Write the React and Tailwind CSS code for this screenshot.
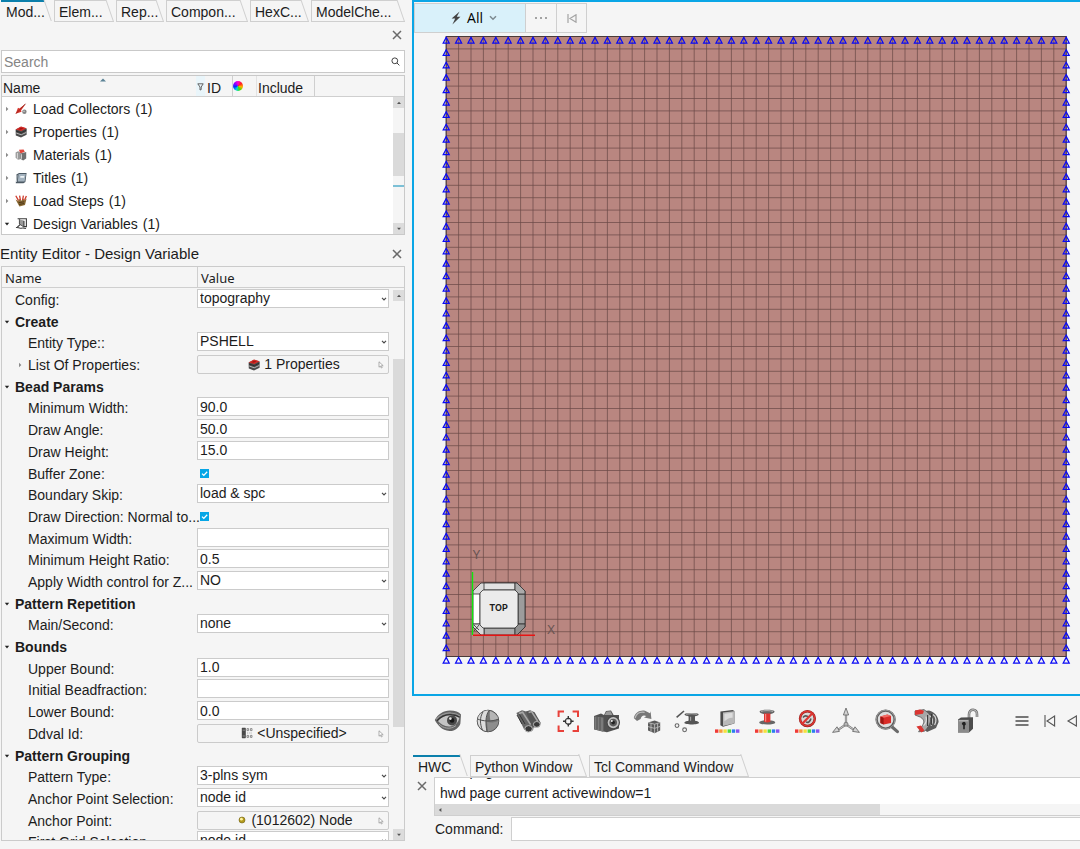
import React, { useState } from "react";

const sideTabs = [
  { label: "Mod...", width: "w-[51px]" },
  { label: "Elem...", width: "w-[60px]" },
  { label: "Rep...", width: "w-[48px]" },
  { label: "Compon...", width: "w-[82px]" },
  { label: "HexC...", width: "w-[59px]" },
  { label: "ModelChe...", width: "w-[94px]" },
];

const consoleTabs = [
  { label: "HWC", width: "w-[55px]" },
  { label: "Python Window", width: "w-[117px]" },
  { label: "Tcl Command Window", width: "w-[160px]" },
];

const treeItems = [
  { label: "Load Collectors", icon: "collector" },
  { label: "Properties", icon: "property" },
  { label: "Materials", icon: "material" },
  { label: "Titles", icon: "title" },
  { label: "Load Steps", icon: "step" },
  { label: "Design Variables", icon: "design", open: true },
];

const rows = [
  { label: "Config:", type: "select", value: "topography", top: true },
  { label: "Create", type: "group" },
  { label: "Entity Type::", type: "select", value: "PSHELL" },
  { label: "List Of Properties:", type: "button", value: "1 Properties", icon: "property", arrow: true },
  { label: "Bead Params", type: "group" },
  { label: "Minimum Width:", type: "text", value: "90.0" },
  { label: "Draw Angle:", type: "text", value: "50.0" },
  { label: "Draw Height:", type: "text", value: "15.0" },
  { label: "Buffer Zone:", type: "check" },
  { label: "Boundary Skip:", type: "select", value: "load & spc" },
  { label: "Draw Direction: Normal to...", type: "check" },
  { label: "Maximum Width:", type: "text", value: "" },
  { label: "Minimum Height Ratio:", type: "text", value: "0.5" },
  { label: "Apply Width control for Z...", type: "select", value: "NO" },
  { label: "Pattern Repetition", type: "group" },
  { label: "Main/Second:", type: "select", value: "none" },
  { label: "Bounds", type: "group" },
  { label: "Upper Bound:", type: "text", value: "1.0" },
  { label: "Initial Beadfraction:", type: "text", value: "" },
  { label: "Lower Bound:", type: "text", value: "0.0" },
  { label: "Ddval Id:", type: "button", value: "<Unspecified>", icon: "ddval" },
  { label: "Pattern Grouping", type: "group" },
  { label: "Pattern Type:", type: "select", value: "3-plns sym" },
  { label: "Anchor Point Selection:", type: "select", value: "node id" },
  { label: "Anchor Point:", type: "button", value: "(1012602) Node", icon: "node" },
  { label: "First Grid Selection", type: "select", value: "node id" },
];

function CloseIcon() {
  return (
    <svg viewBox="0 0 10 10" className="size-[10px]" stroke="#6a6a6a" strokeWidth="1.5">
      <path d="M1 1l8 8M9 1l-8 8" />
    </svg>
  );
}

function Chevron({ className }) {
  return (
    <svg viewBox="0 0 6 4" className={className} fill="none" stroke="#4a4a4a" strokeWidth="1.2">
      <path d="M1 .8l2 2 2-2" />
    </svg>
  );
}

function TreeArrow({ open }) {
  return (
    <svg viewBox="0 0 6 6" className="size-[6px] shrink-0">
      {open ? <path d="M.8 1.8h4.4L3 4.4z" fill="#222" /> : <path d="M2 .8v4.4L4.4 3z" fill="#8a8a8a" />}
    </svg>
  );
}

function SmallIcon({ name }) {
  return (
    <svg viewBox="0 0 12 12" className="size-[12px] shrink-0">
      {name === "collector" && (
        <>
          <path d="M11 .4L4.4 5.4 3 4.8.6 10.8l6-2-.6-1.4z" fill="#d8352c" />
          <path d="M10.4.8L1 10.6" stroke="#7d1f19" strokeWidth=".7" />
          <circle cx="9.4" cy="8.8" r="2.2" fill="#858585" />
          <circle cx="9" cy="8.3" r=".7" fill="#ddd" />
        </>
      )}
      {name === "property" && (
        <>
          <path d="M.6 3.4L6 .8l5.600 1.600v6.400L6 11.600.8 9.600z" fill="#4b4b4b" />
          <path d="M.6 3.400L6 .6l5.600 1.600L6.400 5z" fill="#d92d28" />
          <path d="M1 5l5.400 1.800L11.400 4" stroke="#2e2e2e" strokeWidth="1" fill="none" />
          <path d="M1.200 7l5 1.800 5.200-2.400" stroke="#b5b5b5" strokeWidth="1" fill="none" />
          <path d="M3 3.200l3-1.400 2.600.8-2.800 1.200z" fill="#a31713" />
        </>
      )}
      {name === "material" && (
        <>
          <path d="M.6 3.600L3 2.200l2.400.8v7.200l-2.400.6-2.400-2z" fill="#9a9a9a" />
          <path d="M4 .8l4.600-.4 1.200 2.400-4.400 1.600z" fill="#e2473c" />
          <path d="M5.200 4.400L11.200 3v6.400l-3 2-3-1.600z" fill="#707070" />
          <path d="M6.400 5.200v4.600M2.400 4v5.600" stroke="#e2e2e2" strokeWidth=".9" />
        </>
      )}
      {name === "title" && (
        <>
          <path d="M1.400 2.600L4 1h7.600L10.400 10l-2 1.200H.8z" fill="#4d5a64" />
          <path d="M3.600 2h7.200l-1.200 7.400H2.800z" fill="#a3b2be" />
          <path d="M5.400 4h4L9 5.800H5.200z" fill="#eef3f6" />
          <path d="M2 3.200L1.400 10" stroke="#dfe5e9" strokeWidth=".8" />
        </>
      )}
      {name === "step" && (
        <>
          <path d="M.6 4.400l2.400 1.400L4.400 4l2 1.800L8 3.600l1.400 1.600 2.200-1.600-1.600 6.400-5.600 1.400z" fill="#8a6a34" />
          <path d="M.8.8l2.600 4.600M4.600.6l.8 4.400M8.400.6L7.600 5M11.400 1L9.600 5" stroke="#cf3a2c" strokeWidth="1.300" />
          <path d="M3.600 7.600l5.600-.8M4 9.400l5.200-.8" stroke="#3d2b12" strokeWidth=".8" />
        </>
      )}
      {name === "design" && (
        <>
          <path d="M2.600.8h8.800v7.800H8.800V3.400H5v3.400L2.400 9" fill="none" stroke="#3c3c3c" strokeWidth="1.100" />
          <path d="M4.400 1v5l4.400 3V3" fill="#9a9a9a" stroke="#3c3c3c" strokeWidth=".8" />
          <path d="M1 9.600c2-.8 3 1.200 5 .6s3-.4 5 .4" fill="none" stroke="#3c3c3c" strokeWidth="1.100" />
        </>
      )}
      {name === "ddval" && (
        <>
          <rect x=".8" y=".8" width="4" height="10.400" rx=".6" fill="#4a4a4a" />
          <path d="M1.600 3.200h2.400M1.600 9h2.400" stroke="#999" strokeWidth=".8" />
          <path d="M6 1.600h1.600v2H6zM9.400 1.600H11v2H9.400zM6 8.400h1.600v2H6zM9.400 8.400H11v2H9.400z" fill="none" stroke="#777" strokeWidth=".8" />
          <path d="M6 6h5.400" stroke="#999" strokeWidth=".8" strokeDasharray="1 .8" />
        </>
      )}
      {name === "node" && (
        <>
          <circle cx="7" cy="6" r="3" fill="#b39a1c" stroke="#6f5f12" strokeWidth=".6" />
          <circle cx="6.400" cy="5.200" r="1.400" fill="#fff3a0" />
        </>
      )}
    </svg>
  );
}

function PickIcon() {
  return (
    <svg viewBox="0 0 6 8" className="absolute right-[4px] top-[5px] h-[8px] w-[6px]" fill="#fff" stroke="#9a9a9a" strokeWidth=".8">
      <path d="M1 .8v5.400l1.400-1.200.9 2 .9-.4-.8-1.900h1.800z" />
    </svg>
  );
}

function SlantTabs({ tabs, active, onSelect, label }) {
  return (
    <div role="tablist" aria-label={label} className="flex h-[22px] gap-[2px]">
      {tabs.map((tab, i) => (
        <button
          key={tab.label}
          type="button"
          role="tab"
          aria-selected={i === active}
          onClick={() => onSelect(i)}
          className={`relative shrink-0 text-left whitespace-nowrap pt-[2px] leading-[20px] after:absolute after:right-[4px] after:-top-px after:h-[22px] after:w-[6px] after:skew-x-[19deg] after:border-r after:border-[#cfcfcf] after:content-[''] ${tab.width} ${
            i === active ? "pl-[5px]" : "border-b border-l border-[#cfcfcf] pl-[4px]"
          }`}
        >
          <span
            className={`absolute left-0 top-0 right-[8px] ${
              i === active ? "h-[2px] bg-[#0b7fab]" : "h-px bg-[#cfcfcf]"
            }`}
          />
          {tab.label}
        </button>
      ))}
    </div>
  );
}

function ScrollButton({ down }) {
  return (
    <button type="button" aria-label={down ? "Scroll down" : "Scroll up"} className="flex h-[11px] w-full shrink-0 items-center justify-center bg-[#dcdcdc]">
      <svg viewBox="0 0 6 4" className="h-[4px] w-[6px]" fill="#555">
        {down ? <path d="M1 .8h4L3 3z" /> : <path d="M1 3h4L3 .8z" />}
      </svg>
    </button>
  );
}

function ModelBrowser() {
  return (
    <>
      <div className="flex h-[28px] items-center justify-end pb-[2px] pr-[3px]">
        <button type="button" aria-label="Close browser">
          <CloseIcon />
        </button>
      </div>
      <div className="ml-px flex h-[23px] items-center border border-[#c9c9c9] bg-white pr-[4px]">
        <input type="search" aria-label="Search" placeholder="Search" className="min-w-0 flex-1 px-[2px] outline-none placeholder:text-[#858585]" />
        <svg viewBox="0 0 9 9" className="size-[9px]" fill="none" stroke="#444" strokeWidth="1">
          <circle cx="3.800" cy="3.800" r="2.900" />
          <path d="M6 6l2.400 2.400" />
        </svg>
      </div>
      <div className="mt-[2px] ml-px flex h-[160px] flex-col border border-[#c9c9c9] bg-white">
        <div className="flex h-[21px] shrink-0 border-b border-[#cfcfcf] bg-[#f5f5f5] leading-[24px]">
          <div className="relative w-[194px] pl-px">
            Name
            <svg viewBox="0 0 6 4" className="absolute left-[98px] top-[2px] h-[4px] w-[6px]" fill="#5a8296">
              <path d="M0 3.400h6L3 .6z" />
            </svg>
          </div>
          <div className="flex w-[37px] border-r border-[#cfcfcf]">
            <span className="flex h-full w-[9px] items-center justify-center bg-[#e9f5fa] pt-[2px]">
              <svg viewBox="0 0 7 8" className="h-[8px] w-[7px]" fill="none" stroke="#555" strokeWidth=".9">
                <path d="M.8.8h5.400L4.200 4v2.600L3 7V4z" />
              </svg>
            </span>
            <span className="pl-[2px]">ID</span>
          </div>
          <div className="flex w-[24px] items-center border-r border-[#e2e2e2]">
            <span className="size-[10px] rounded-full bg-[conic-gradient(#ff00d0,#ff2020,#ffb000,#40e000,#00d8e0,#0030ff,#9000ff,#ff00d0)]" />
          </div>
          <div className="w-[58px] border-r border-[#cfcfcf] pl-px">Include</div>
        </div>
        <div className="flex min-h-0 flex-1">
          <ul className="flex-1 overflow-hidden">
            {treeItems.map((item) => (
              <li key={item.label} className="flex h-[23px] items-center pl-[2px]">
                <TreeArrow open={item.open} />
                <span className="ml-[5px] mr-[6px] flex">
                  <SmallIcon name={item.icon} />
                </span>
                <span>{item.label}</span>
                <span className="ml-[5px]">(1)</span>
              </li>
            ))}
          </ul>
          <div className="flex w-[11px] flex-col bg-[#f5f5f5]">
            <ScrollButton />
            <div className="mt-[25px] h-[43px] bg-[#dadada]" />
            <div className="mt-[9px] h-[2px] bg-[#7cc0d6]" />
            <div className="flex-1" />
            <ScrollButton down />
          </div>
        </div>
      </div>
    </>
  );
}

function Field({ row, id }) {
  if (row.type === "select") {
    return (
      <div className="relative">
        <select id={id} defaultValue={row.value} className="block h-[19px] w-full appearance-none border border-[#cbcbcb] bg-white pl-[2px] leading-[17px] outline-none">
          <option>{row.value}</option>
        </select>
        <Chevron className="pointer-events-none absolute right-[2px] top-[8px] h-[4px] w-[6px]" />
      </div>
    );
  }
  if (row.type === "text") {
    return <input id={id} type="text" defaultValue={row.value} className="block h-[19px] w-full border border-[#cbcbcb] bg-white px-[2px] leading-[17px] outline-none" />;
  }
  if (row.type === "check") {
    return (
      <span className="relative ml-[3px] mt-[6px] block size-[9px]">
        <input id={id} type="checkbox" defaultChecked className="block size-[9px] appearance-none bg-[#06a6e6]" />
        <svg viewBox="0 0 9 9" className="pointer-events-none absolute inset-0 size-[9px]" fill="none" stroke="#fff" strokeWidth="1.300">
          <path d="M2 4.600l1.800 1.800L7.200 2.800" />
        </svg>
      </span>
    );
  }
  if (row.type === "button") {
    return (
      <button id={id} type="button" className="relative mt-px flex h-[19px] w-full items-center justify-center gap-[4px] rounded-[2px] border border-[#cbcbcb] bg-[#f5f5f5] pl-[2px] leading-[19px]">
        <SmallIcon name={row.icon} />
        {row.value}
        <PickIcon />
      </button>
    );
  }
  return null;
}

function EntityEditor() {
  return (
    <>
      <div className="flex h-[31px] items-center justify-between pt-[6px] pr-[3px]">
        <h2 className="text-[15px] leading-[20px]">Entity Editor - Design Variable</h2>
        <button type="button" aria-label="Close entity editor">
          <CloseIcon />
        </button>
      </div>
      <div className="ml-px flex min-h-0 flex-1 flex-col border border-[#cbcbcb]">
        <div className="flex h-[21px] shrink-0 border-b border-[#cfcfcf] font-['Noto_Sans'] text-[13px] leading-[22px]">
          <div className="w-[196px] border-r border-[#cfcfcf] pl-[3px]">Name</div>
          <div className="pl-[3px]">Value</div>
        </div>
        <div className="flex min-h-0 flex-1">
          <div className="min-w-0 flex-1 overflow-hidden pt-px">
            <div className="grid h-[564px] auto-rows-fr">
              {rows.map((row, i) => (
                <div key={row.label} className="flex items-start leading-[22px]">
                  {row.type === "group" ? (
                    <div className="flex items-center gap-[5px] pl-[2px] font-bold">
                      <TreeArrow open />
                      {row.label}
                    </div>
                  ) : (
                    <>
                      <label htmlFor={`field-${i}`} className={`flex w-[195px] shrink-0 items-center whitespace-nowrap ${row.top ? "pl-[13px]" : row.arrow ? "gap-[5px] pl-[15px]" : "pl-[26px]"}`}>
                        {row.arrow && <TreeArrow />}
                        {row.label}
                      </label>
                      <div className="min-w-0 flex-1 pr-[4px]">
                        <Field row={row} id={`field-${i}`} />
                      </div>
                    </>
                  )}
                </div>
              ))}
            </div>
          </div>
          <div className="flex w-[11px] flex-col bg-[#f5f5f5] pt-[2px]">
            <ScrollButton />
            <div className="mt-[58px] h-[368px] bg-[#dadada]" />
            <div className="flex-1" />
            <ScrollButton down />
          </div>
        </div>
      </div>
    </>
  );
}

// 50 x 50 shell mesh with constraints on every boundary node
function Mesh() {
  const n = 50;
  const cell = 12.4;
  const size = n * cell;
  const steps = Array.from({ length: n + 1 }, (_, i) => i * cell);
  const nodes = [
    ...steps.map((s) => [s, 0]),
    ...steps.map((s) => [s, size]),
    ...steps.slice(1, -1).map((s) => [0, s]),
    ...steps.slice(1, -1).map((s) => [size, s]),
  ];

  return (
    <svg viewBox="0 0 632 632" className="block h-[632px] w-[632px]">
      <g transform="translate(6.2 2.5)">
        <rect width={size} height={size} fill="#b98680" />
        {steps.map((s) => (
          <path key={s} d={`M${s} 0V${size}M0 ${s}H${size}`} stroke="#6b4a46" strokeOpacity=".72" strokeWidth="1" />
        ))}
        <rect width={size} height={size} fill="none" stroke="#4a3a38" strokeWidth="1" />
        {nodes.map(([x, y]) => (
          <path key={`${x}-${y}`} d={`M${x} ${y + 0.9}l3 5.600h-6z`} fill="none" stroke="#0909f5" strokeWidth="1.250" />
        ))}
      </g>
      {/* view cube, 52px wide */}
      <g transform="translate(33 549)" stroke="#2f2f2f" strokeWidth=".8" strokeLinejoin="round">
        <path d="M8 0h36l8 8v36l-8 8H8l-8-8V8z" fill="#dadada" />
        <path d="M11 0h31v7H11z" fill="#e2e2e2" />
        <path d="M0 11h7v30H0z" fill="#fff" />
        <path d="M45 11h7v30h-7z" fill="#9c9c9c" />
        <path d="M11 45h31v7H11z" fill="#ababab" />
        <path d="M42 0h2l8 8v3h-7l-3-4z" fill="#ababab" />
        <path d="M45 41h7v3l-8 8h-2v-7z" fill="#8f8f8f" />
        <path d="M11 45v7H8l-8-8v-3h7z" fill="#d9d9d9" />
        <path d="M10 7h32l3 3v32l-3 3H10l-3-3V10z" fill="#ebebeb" />
        <path d="M1 42l5 5M6 42l-5 6" fill="none" />
      </g>
      <path d="M32.500 538v63" stroke="#0ce80c" strokeWidth="1.400" />
      <path d="M33 601.200h62" stroke="#e81414" strokeWidth="1.400" />
      <text x="58.500" y="577" textAnchor="middle" fill="#1c1c1c" fontFamily="Inter, sans-serif" fontSize="9" fontWeight="700">TOP</text>
      <text x="36.500" y="525" textAnchor="middle" fill="#685452" className="font-['Noto_Sans'] text-[13px]">Y</text>
      <text x="111" y="600" textAnchor="middle" fill="#685452" className="font-['Noto_Sans'] text-[13px]">X</text>
    </svg>
  );
}

function Viewport() {
  return (
    <main className="min-h-0 flex-1 overflow-hidden border-2 border-r-0 border-[#0aa6e6] bg-[#f5f5f5]">
      <div className="mt-px flex h-[30px] w-[173px] border border-[#cfcfcf]">
        <button type="button" className="flex w-[111px] items-center justify-center gap-[6px] border-r border-[#cfcfcf] bg-[#d9f1fa] pl-[8px] font-['Open_Sans'] text-[14px] text-black">
          <svg viewBox="0 0 10 14" className="h-[14px] w-[10px]" fill="#444">
            <path d="M8.600.4L.6 7.600h3.600L1.400 13.400l8-7.600H5.800z" />
          </svg>
          All
          <svg viewBox="0 0 8 6" className="h-[6px] w-[8px]" fill="none" stroke="#7c8a90" strokeWidth="1.500">
            <path d="M1 1.200l3 3 3-3" />
          </svg>
        </button>
        <button type="button" aria-label="More" className="flex w-[31px] items-center justify-center border-r border-[#cfcfcf]">
          <svg viewBox="0 0 12 2" className="h-[2px] w-[12px]" fill="#a3a3a3">
            <path d="M0 0h2v2H0zM5 0h2v2H5zM10 0h2v2h-2z" />
          </svg>
        </button>
        <button type="button" aria-label="First" className="flex flex-1 items-center justify-center">
          <svg viewBox="0 0 10 9" className="h-[9px] w-[10px]" fill="none" stroke="#a3a3a3" strokeWidth="1.200">
            <path d="M1 0v9M9 .8v7.400L3 4.500z" />
          </svg>
        </button>
      </div>
      <div className="pl-[26px] pt-px">
        <Mesh />
      </div>
    </main>
  );
}

function Rainbow() {
  return (
    <>
      {["#f03a36", "#f79a3c", "#f5e13a", "#4fd83a", "#2a7ff0", "#8a55f0"].map((c, i) => (
        <rect key={c} x={2 + i * 4.2} y="22.400" width="3.400" height="3.400" fill={c} />
      ))}
    </>
  );
}

const toolIcons = [
  {
    name: "Visualization",
    art: (
      <>
        <path d="M.8 13C4 7 9 3.600 16 3.400c5 0 9 1.600 11 4l-.6 9c-1 4-6 8-11 7.600C8 23.600 3.600 18 .8 13z" fill="#646464" />
        <path d="M4 14c4-4.600 9-6 13-5.800 4 .2 6 1 8.400 2.400-.6 5-5 9-10.400 8.800-5-.2-8.600-2.400-11-5.400z" fill="#c4c4c4" />
        <path d="M2 12.400c5-5 10-6.800 15-6.400 4 .2 7 1.400 9 3" fill="none" stroke="#9a9a9a" strokeWidth="1.200" />
        <path d="M3 13.800c5-5.400 10-6.600 15-6 3 .2 5.600 1 7.600 2.400" fill="none" stroke="#333" strokeWidth="1.200" />
        <circle cx="18" cy="13.400" r="5" fill="#484848" />
        <circle cx="18" cy="13.400" r="2.300" fill="#161616" />
        <circle cx="16.400" cy="11.600" r="1.300" fill="#e8e8e8" />
        <path d="M5 17c4 4.400 11 6 17 1.600" stroke="#a5a5a5" strokeWidth="1" fill="none" />
      </>
    ),
  },
  {
    name: "Globe",
    art: (
      <>
        <circle cx="14" cy="14" r="10.800" fill="#747474" stroke="#505050" />
        <path d="M4 11C6 5 11 3.200 15 3.600c-3 5-3.600 11-2.400 20.600C6 23 2.600 17 4 11z" fill="#dcdcdc" />
        <path d="M16 4c4 1 7.400 4.400 8.400 8-2.400 1.200-4.400 1.600-8 1.600-.8-4-.8-7-.4-9.600z" fill="#b5b5b5" />
        <path d="M13 15c4 1 8 .4 11.600-1.600-.2 5.600-4.600 10.400-10.600 11z" fill="#8d8d8d" />
        <path d="M3.600 12c5 2.200 14 3 21 0M15 3.400c-4 6-3.400 14-2 21M9 4.800C5.400 11 6 17 8.400 23" fill="none" stroke="#505050" strokeWidth="1" />
      </>
    ),
  },
  {
    name: "Find",
    art: (
      <>
        <path d="M2.400 6L8 3.200l5 1.600 7 14-1 4.400-5.600 2-3.400-3z" fill="#666" />
        <path d="M12 4.600l4-1.400 4.600 2L26.800 16l-2 3.600-5 1-3-3z" fill="#555" />
        <path d="M5 6.600l3.600-1.400 8 12.400M14.600 5.600l3-1 6 9.400" stroke="#a8a8a8" strokeWidth="1.600" fill="none" />
        <ellipse cx="14.600" cy="21.800" rx="3.800" ry="3.200" fill="#393939" stroke="#bbb" />
        <ellipse cx="22.800" cy="17.400" rx="3.400" ry="2.900" fill="#393939" stroke="#bbb" />
        <path d="M3 8l5 9M5.400 7.400l5.600 9.600" stroke="#333" strokeWidth="1" />
      </>
    ),
  },
  {
    name: "Fit view",
    art: (
      <>
        <path d="M4.600 10V4.600H10M18.600 4.600H24V10M24 18.600V24h-5.400M10 24H4.600v-5.400" fill="none" stroke="#e8413a" strokeWidth="2" />
        <circle cx="14.300" cy="14.300" r="3" fill="none" stroke="#333" strokeWidth="1.200" />
        <path d="M14.300 9v3.200M14.300 16.400v3.200M9 14.300h3.200M16.400 14.300h3.200" stroke="#333" strokeWidth="1.400" />
      </>
    ),
  },
  {
    name: "Capture",
    art: (
      <>
        <path d="M1 9l7-2.400L11 8l2-4 5-.6L20.600 8H26v13.600l-12 3.600L1 22.600z" fill="#525252" />
        <path d="M1.400 9.400l9 1.200V25l-9-2.800z" fill="#7b7b7b" />
        <path d="M4 10v12.600M7 10.400v13.200" stroke="#4c4c4c" strokeWidth=".9" />
        <path d="M11.600 8l2-3.400 4-.4L19.400 8z" fill="#9a9a9a" />
        <circle cx="20.200" cy="15.600" r="6.200" fill="#c3c3c3" stroke="#484848" strokeWidth="1.200" />
        <circle cx="20.200" cy="15.600" r="3.800" fill="#5c5c5c" />
        <circle cx="20.200" cy="15.600" r="1.800" fill="#222" />
        <circle cx="18.800" cy="14" r="1" fill="#eee" />
      </>
    ),
  },
  {
    name: "Rotate model",
    art: (
      <>
        <path d="M.8 11C2 5.600 7 2.800 12 3.800l5 2.400.6-2 .8 7.800-7.400-1.600 2.400-1.400c-3-1.400-5-.4-5.800 3L4 14z" fill="#777" />
        <path d="M2 11c1.600-4.600 5.600-6.400 9.600-5.600" stroke="#bdbdbd" strokeWidth="1.200" fill="none" />
        <path d="M15 15.600l6.600-2 5.600 2v8l-5.600 2.600L15 23.600z" fill="#5b5b5b" />
        <path d="M15 15.600l6.600 1.600 5.600-1.600M21.600 17.200v9M18 16.200v8.600M24.600 16.400v8.200M15 19.600l6.600 1.800 5.600-2" stroke="#bbb" strokeWidth=".9" fill="none" />
      </>
    ),
  },
  {
    name: "Mesh lines",
    art: (
      <>
        <path d="M3.600 10.400L11 4" stroke="#555" strokeWidth="1.600" />
        <circle cx="4" cy="18.600" r="1.900" fill="none" stroke="#666" strokeWidth="1.100" />
        <circle cx="11.600" cy="22.800" r="1.900" fill="none" stroke="#666" strokeWidth="1.100" />
        <path d="M11.600 7.400c0-1.800 14-1.800 14 0 0 1.200-3 1.400-3.600 2v4c.6.6 4 .8 4 2.400 0 2.200-14.600 2.200-14.600 0 0-1.600 3.600-1.800 4.200-2.400v-4c-.4-.6-4-.8-4-2z" fill="#555" />
        <path d="M13 7.200c2-.8 9-.8 11.200 0M17.600 9.800v4" stroke="#aaa" strokeWidth="1.100" fill="none" />
      </>
    ),
  },
  {
    name: "Element color",
    art: (
      <>
        <path d="M7.400 4.400l12.200-1.400L21.400 4v12.600L10 19.800l-2.600-1.600z" fill="#4c4c4c" />
        <path d="M10 5.400L21 4.200v12.200L10 19z" fill="#b9b9b9" />
        <path d="M11.400 6.800l8.200-1v5c-3-.4-5.600 1.400-8.200 3.400z" fill="#dcdcdc" />
        <Rainbow />
      </>
    ),
  },
  {
    name: "Property color",
    art: (
      <>
        <path d="M6.600 4.600c0-2.400 15-2.400 15 0 0 1.800-4 2.400-5 2.800h-5c-1-.4-5-1-5-2.800z" fill="#666" />
        <path d="M6.200 15.400c0-2.800 16-2.800 16 0s-16 2.800-16 0z" fill="#666" />
        <path d="M11 6.400h6.400v8.400c-2 .8-4.400.8-6.400 0z" fill="#de3430" />
        <path d="M12.600 7v7.600" stroke="#f58a84" strokeWidth="1.200" />
        <path d="M8 4.400c3-1 9-1 12 0" stroke="#b5b5b5" strokeWidth="1" fill="none" />
        <Rainbow />
      </>
    ),
  },
  {
    name: "No contour",
    art: (
      <>
        <circle cx="14.400" cy="11.600" r="7.400" fill="#d9d9d9" stroke="#8c1f1c" strokeWidth="2.400" />
        <circle cx="14.400" cy="11.600" r="7.400" fill="none" stroke="#dd3632" strokeWidth="1.500" />
        <path d="M10 10.400c2-2.400 4-1.600 6 0M13 15c2 1 4 0 5-3.400" stroke="#555" strokeWidth="1.600" fill="none" />
        <path d="M9.200 16.800l10-10.400" stroke="#dd3632" strokeWidth="2.200" />
        <Rainbow />
      </>
    ),
  },
  {
    name: "Axes",
    art: (
      <>
        <path d="M14 8v9.400L6 22.800M14 17.400l8 5.400" stroke="#777" strokeWidth="2.200" fill="none" />
        <path d="M14 8v9.400L6 22.800M14 17.400l8 5.400" stroke="#ddd" strokeWidth=".8" fill="none" />
        <path d="M14 1l2.600 7h-5.200zM.6 25.400l4.400-5.600 2.400 4.600zM27.400 25.400L23 19.800l-2.400 4.600z" fill="#d4d4d4" stroke="#6c6c6c" strokeWidth=".9" />
        <circle cx="14" cy="17.200" r="2" fill="#b5b5b5" stroke="#6c6c6c" strokeWidth=".8" />
      </>
    ),
  },
  {
    name: "Inspect",
    art: (
      <>
        <path d="M19 19l6.400 5.600" stroke="#6a6a6a" strokeWidth="3.200" strokeLinecap="round" />
        <circle cx="13.600" cy="12.600" r="9" fill="#dcdcdc" stroke="#5d5d5d" strokeWidth="2.400" />
        <circle cx="13.600" cy="12.600" r="9.400" fill="none" stroke="#aaa" strokeWidth=".8" />
        <path d="M8.400 9.400l7-1.800 3.600 1.400v7l-7.400 1.600L8.400 16z" fill="#d92b27" />
        <path d="M8.400 9.400l3.200 1.400L19 9l-3.600-1.400z" fill="#f26b64" />
        <path d="M8.400 9.400l3.200 1.400v6.800L8.400 16z" fill="#9d1613" />
      </>
    ),
  },
  {
    name: "Section cut",
    art: (
      <>
        <path d="M8 4.400l9-1c6 1.600 9.400 6 9.600 11.600L24 21l-9 4-4-4 2-7z" fill="#5c5c5c" />
        <path d="M3 4l9-1.400 4.600 3.600c4 5 2 12-4 18l-6 .6 3-5c3-4 3-7-1-9.600L3 8z" fill="#a8a8a8" stroke="#555" strokeWidth=".8" />
        <path d="M3 3.600L8 2.400l4 1.400-1 3-8 1.200zM4.400 19.600l4.600-1 3.400 4.800-3 2z" fill="#da3531" />
        <path d="M17.400 8.600c3 1 4 6 1.600 10M21 7.600c3.600 2 3.600 7 1.600 10.400M14 9.600c1 3 0 7-2.400 9" stroke="#ddd" strokeWidth="1.200" fill="none" />
        <path d="M15.600 8v11M19.400 7v11" stroke="#333" strokeWidth="1" />
      </>
    ),
  },
  {
    name: "Unlock",
    art: (
      <>
        <path d="M17 12V7.400C17 1 25.400 1.400 25 7.400v2.600" fill="none" stroke="#6e6e6e" strokeWidth="2.600" />
        <path d="M17 12V7.400C17 1 25.400 1.400 25 7.400v2.600" fill="none" stroke="#d0d0d0" strokeWidth=".9" />
        <path d="M6 12.600l3-2 12-.4v11.600l-4 3.600H6z" fill="#4c4c4c" />
        <path d="M6 12.800h11v12.600H6z" fill="#8b8b8b" />
        <path d="M9.800 17a2 2 0 113 1.600v3.600h-1.600v-3.600z" fill="#222" />
        <path d="M7 13.800h9" stroke="#c6c6c6" strokeWidth=".9" />
      </>
    ),
  },
];

function Toolbar() {
  return (
    <div className="flex h-[50px] shrink-0 items-center pl-[22px]">
      <div className="flex w-[546px] shrink-0 justify-between">
        {toolIcons.map((tool) => (
          <button key={tool.name} type="button" aria-label={tool.name} title={tool.name}>
            <svg viewBox="0 0 28 28" className="size-[28px]">
              {tool.art}
            </svg>
          </button>
        ))}
      </div>
      <div className="ml-[35px] flex shrink-0 items-center gap-[15px]">
        <button type="button" aria-label="Menu">
          <svg viewBox="0 0 14 12" className="h-[12px] w-[14px]" stroke="#4c4c4c" strokeWidth="1.700">
            <path d="M.5 2h13M.5 6h13M.5 10h13" />
          </svg>
        </button>
        <button type="button" aria-label="First page">
          <svg viewBox="0 0 12 12" className="size-[12px]" fill="none" stroke="#555" strokeWidth="1.100">
            <path d="M1 0v12M10.600 1v10L3 6z" />
          </svg>
        </button>
        <button type="button" aria-label="Previous page" className="-ml-[5px]">
          <svg viewBox="0 0 12 12" className="size-[12px]" fill="none" stroke="#555" strokeWidth="1.100">
            <path d="M10.400 1v10L2 6z" />
          </svg>
        </button>
      </div>
    </div>
  );
}

function Console() {
  const [tab, setTab] = useState(0);

  return (
    <section className="shrink-0 pt-[9px]">
      <div className="pl-px">
        <SlantTabs tabs={consoleTabs} active={tab} onSelect={setTab} label="Console" />
      </div>
      <div className="flex">
        <div className="flex w-[22px] shrink-0 items-start pl-[5px] pt-[4px]">
          <button type="button" aria-label="Close console">
            <CloseIcon />
          </button>
        </div>
        <div className="min-w-0 flex-1">
          <div className="border-y border-l border-[#cfcfcf] bg-white">
            <div className="flex h-[26px] flex-col justify-end overflow-hidden pl-[5px] leading-[22px]">
              <p className="shrink-0">hwd page</p>
              <p className="shrink-0">hwd page current activewindow=1</p>
            </div>
            <div className="flex h-[11px] bg-[#f5f5f5]">
              <div className="flex w-[69%] items-center bg-[#dadada] pl-[3px]">
                <svg viewBox="0 0 4 6" className="h-[6px] w-[4px]" fill="#555">
                  <path d="M3.400 1v4L.8 3z" />
                </svg>
              </div>
            </div>
          </div>
          <div className="mt-px flex h-[24px] items-center">
            <label htmlFor="command" className="w-[77px] shrink-0 pl-px">
              Command:
            </label>
            <input id="command" type="text" className="h-full min-w-0 flex-1 border border-r-0 border-[#cfcfcf] bg-white px-[4px] outline-none" />
          </div>
        </div>
      </div>
    </section>
  );
}

export default function App() {
  const [tab, setTab] = useState(0);

  return (
    <div className="flex h-screen overflow-hidden bg-[#f5f5f5] font-['Liberation_Sans',sans-serif] text-[14px] leading-[20px] text-[#1c1c1c]">
      <aside className="flex w-[405px] shrink-0 flex-col pb-[8px]">
        <div className="pl-px">
          <SlantTabs tabs={sideTabs} active={tab} onSelect={setTab} label="Browsers" />
        </div>
        <ModelBrowser />
        <EntityEditor />
      </aside>
      <div className="ml-[7px] flex min-w-0 flex-1 flex-col pb-[8px]">
        <Viewport />
        <Toolbar />
        <Console />
      </div>
    </div>
  );
}
